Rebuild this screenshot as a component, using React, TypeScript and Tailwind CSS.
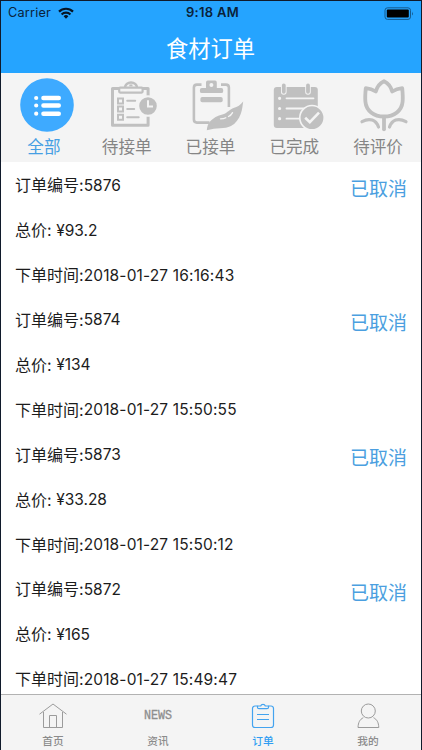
import React, { useState } from 'react';

interface Order {
  id: number;
  total: string;
  createdAt: string;
  status: string;
}

interface TabItem {
  label: string;
  icon: React.ReactNode;
}

const orders: Order[] = [
  { id: 5876, total: '93.2', createdAt: '2018-01-27 16:16:43', status: '已取消' },
  { id: 5874, total: '134', createdAt: '2018-01-27 15:50:55', status: '已取消' },
  { id: 5873, total: '33.28', createdAt: '2018-01-27 15:50:12', status: '已取消' },
  { id: 5872, total: '165', createdAt: '2018-01-27 15:49:47', status: '已取消' },
];

const ListIcon = () => (
  <svg viewBox="0 0 84 62" className="w-[84px] h-[62px]">
    <circle cx="46" cy="32" r="26.8" fill="#3eaaff" />
    <g stroke="#fff" strokeWidth="4.2" strokeLinecap="round">
      <path d="M35.2 25h.01M35.2 32.5h.01M35.2 40.7h.01" />
      <path d="M42.4 25h15.4M42.4 32.5h15.4M42.4 40.7h15.4" strokeWidth="4.4" />
    </g>
  </svg>
);

const PendingIcon = () => (
  <svg viewBox="0 0 84 62" className="w-[84px] h-[62px]" fill="none" stroke="#c0c0c0">
    <path d="M27.5 15.5h35.6v36.8H27.5z" strokeWidth="3" strokeLinejoin="round" />
    <path d="M40 14.5a6 5 0 0 1 12 0" strokeWidth="2.4" />
    <rect x="34.2" y="14.6" width="23.4" height="5" rx="1" fill="#f4f4f4" strokeWidth="2.2" />
    <path d="M44.3 12.4h3.2" strokeWidth="2" />
    <path d="M33 25.6h5v5h-5zM33 33.6h5v5h-5zM33 41.7h5v5h-5z" strokeWidth="2" />
    <path d="M42.2 27.8h8M42.2 36h7M42.2 44.2h11.5" strokeWidth="2" strokeLinecap="round" />
    <circle cx="63" cy="33" r="9.8" fill="#c0c0c0" stroke="#f4f4f4" strokeWidth="2" />
    <path d="M63 27.2v6.2h5" stroke="#f4f4f4" strokeWidth="2" />
  </svg>
);

const AcceptedIcon = () => (
  <svg viewBox="0 0 84 62" className="w-[84px] h-[62px]" fill="none">
    <g stroke="#c0c0c0" strokeWidth="2.6">
      <path d="M32.5 11.6h-4.6q-3 0-3 3v32q0 3 3 3H40.5" />
      <path d="M52 11.6h4.9q3 0 3 3v19.4" />
    </g>
    <path d="M37 15V9.4a1.8 1.8 0 0 1 1.8-1.8h7.2a1.8 1.8 0 0 1 1.8 1.8V15h4.5a1.9 1.9 0 0 1 1.9 1.9v1.3a1.9 1.9 0 0 1-1.9 1.900H32.8a1.9 1.9 0 0 1-1.900-1.900v-1.300a1.9 1.9 0 0 1 1.900-1.900z" fill="#c0c0c0" />
    <circle cx="42.4" cy="12" r="2" fill="#f4f4f4" />
    <rect x="31.4" y="24" width="22.3" height="5.2" rx="1.8" fill="#c0c0c0" />
    <path d="M37.800 57.300C38 54 39 50.500 41.500 48c4.500-4.500 9-5.800 13.500-7 3-1 6.500-5.200 9.500-6 4-1 7-3.300 9.700-6.600-.6 4-.9 8-2.400 12.300-2 5.500-5.300 10-9.800 12.300-6.500 3.300-14.500 1.300-24.200 4.300z" fill="#c0c0c0" />
    <path d="M51.500 45.800c2.200 0 4-.4 5.300-1.100M59.500 43.500c1.800-.8 3.200-2.200 4-3.900" stroke="#f4f4f4" strokeWidth="1.300" strokeLinecap="round" />
  </svg>
);

const DoneIcon = () => (
  <svg viewBox="0 0 84 62" className="w-[84px] h-[62px]" fill="none">
    <rect x="21.8" y="14" width="44" height="41" rx="3" fill="#c0c0c0" />
    <g stroke="#f4f4f4" strokeLinecap="round">
      <path d="M31.8 12.5v6.5M56 12.5v6.5" strokeWidth="5.6" />
      <path d="M34.5 25.3H61.5M34.5 35.5H55M34.5 45.7H48" strokeWidth="1.8" />
      <path d="M27.6 25.3h.01M27.6 35.5h.01M27.6 45.7h.01" strokeWidth="3.2" />
    </g>
    <path d="M31.8 12.3v6.5M56 12.3v6.5" stroke="#c0c0c0" strokeWidth="3.8" strokeLinecap="round" />
    <circle cx="60" cy="44.7" r="12.2" fill="#c0c0c0" stroke="#f4f4f4" strokeWidth="1.6" />
    <path d="M53.2 44.8l4.6 4.4 9.200-9.600" stroke="#f4f4f4" strokeWidth="2.6" />
  </svg>
);

const TulipIcon = () => (
  <svg viewBox="0 0 84 62" className="w-[84px] h-[62px]" fill="none" stroke="#c0c0c0" strokeWidth="3.8" strokeLinecap="round" strokeLinejoin="round">
    <path d="M39.8 18.5c1.200-4.500 4-8.300 8.200-10.300 4.200 2 7 5.800 8.200 10.300 2.700-1.800 6-3 10-3.300.4 4 .9 8.500.4 13.500C65.700 37.500 58.500 43.500 48 43.500S30.300 37.500 29.400 28.700c-.5-5 0-9.500.4-13.500 4 .3 7.300 1.500 10 3.300z" />
    <path d="M48 44v12.3" />
    <path d="M26 48.700c8-4.500 14-1.500 16.500 5.300M70 48.700c-8-4.500-14-1.500-16.500 5.300" strokeWidth="3.2" />
  </svg>
);

const HomeIcon = () => (
  <svg viewBox="0 0 30 28" className="w-[30px] h-[28px]" fill="none" stroke="#9b9b9b" strokeWidth="1">
    <path d="M1.500 13.200L15 3l13.500 10.200" />
    <path d="M5.500 11v15.500h19V11" />
    <path d="M11.500 26.500V14.500h7v12" />
  </svg>
);

const OrderIcon = () => (
  <svg viewBox="0 0 30 28" className="w-[30px] h-[28px]" fill="none" stroke="#43a3ef" strokeWidth="1.2">
    <path d="M9.500 5H7a2.500 2.500 0 0 0-2.500 2.500v16.500a2.500 2.500 0 0 0 2.500 2.500h16a2.500 2.500 0 0 0 2.500-2.500V7.500A2.500 2.500 0 0 0 23 5h-2.500" />
    <path d="M9.500 5h3.200a2.400 2.400 0 0 1 4.600 0h3.200v1.200a1.500 1.500 0 0 1-1.500 1.500h-8a1.500 1.500 0 0 1-1.500-1.500z" />
    <path d="M9 13.500h12M9 18.500h12" />
  </svg>
);

const UserIcon = () => (
  <svg viewBox="0 0 30 28" className="w-[30px] h-[28px]" fill="none" stroke="#9b9b9b" strokeWidth="1">
    <circle cx="15.3" cy="10" r="7" />
    <path d="M10.300 16.700c-3.500 1.800-5 4.500-5.300 9.800h20.800c-.3-5.300-1.800-8-5.300-9.800" />
  </svg>
);

const filters: TabItem[] = [
  { label: '全部', icon: <ListIcon /> },
  { label: '待接单', icon: <PendingIcon /> },
  { label: '已接单', icon: <AcceptedIcon /> },
  { label: '已完成', icon: <DoneIcon /> },
  { label: '待评价', icon: <TulipIcon /> },
];

const navItems: TabItem[] = [
  { label: '首页', icon: <HomeIcon /> },
  {
    label: '资讯',
    icon: <span className="mt-1 scale-y-115 font-['Liberation_Mono'] text-[11.7px] leading-none text-[#8e8e8e] [-webkit-text-stroke:0.3px_#8e8e8e]">NEWS</span>,
  },
  { label: '订单', icon: <OrderIcon /> },
  { label: '我的', icon: <UserIcon /> },
];

const StatusBar = () => (
  <div className="flex h-6 items-center justify-between pl-[7px] pr-[6px] text-[#0a2239]">
    <div className="flex flex-1 items-center gap-[7px]">
      <span className="text-[12.7px] tracking-[0.2px]">Carrier</span>
      <svg viewBox="0 0 16 12" className="h-3 w-4" fill="none" stroke="#061525" strokeWidth="2.2">
        <path d="M1 4.600a10 10 0 0 1 14 0M3.600 7.500a6.300 6.300 0 0 1 8.800 0" />
        <path d="M8 11.700L5.600 9.300a3.400 3.400 0 0 1 4.800 0z" fill="#061525" stroke="none" />
      </svg>
    </div>
    <span className="pl-[3px] text-[13px] font-semibold tracking-[0.3px]">9:18 AM</span>
    <div className="flex flex-1 justify-end pr-px">
      <svg viewBox="0 0 30 13" className="h-[13px] w-[30px]">
        <rect x="1" y="0.8" width="25.5" height="11.6" rx="2.5" fill="none" stroke="#145a8f" />
        <rect x="2.8" y="2.6" width="22" height="8" rx="1" fill="#000" />
        <path d="M28 4.600q1.700 2 0 4z" fill="#145a8f" />
      </svg>
    </div>
  </div>
);

const OrderRow = ({ order }: { order: Order }) => (
  <div className="flex justify-between pl-[14px] pr-[14px] text-[16px] text-[#1c1c1c]">
    <div>
      <div className="flex h-[44.9px] items-center whitespace-pre">
        订单编号:<span className="text-[15.5px]">{order.id}</span>
      </div>
      <div className="flex h-[44.9px] items-center whitespace-pre">
        总价: <span className="text-[15.5px]">¥{order.total}</span>
      </div>
      <div className="flex h-[44.9px] items-center whitespace-pre">
        下单时间:<span className="text-[15.5px] tracking-[0.15px]">{order.createdAt}</span>
      </div>
    </div>
    <div className="flex h-[54px] items-center text-[19px] text-[#4b9fe0]">{order.status}</div>
  </div>
);

const App = () => {
  const [filter, setFilter] = useState('全部');
  const [page, setPage] = useState('订单');

  return (
    <div className="flex h-[750px] w-[422px] flex-col overflow-hidden border-l border-r border-t border-[#101a2b] bg-white font-['Inter','Noto_Sans_CJK_SC',sans-serif]">
      <header className="h-[72px] shrink-0 bg-[#25a4ff]">
        <StatusBar />
        <h1 className="flex h-[47px] items-center justify-center pr-[1px] text-[22.3px] text-white">食材订单</h1>
      </header>

      <div className="flex h-[89px] shrink-0 bg-[#f4f4f4] pr-px">
        {filters.map(item => (
          <button
            key={item.label}
            onClick={() => setFilter(item.label)}
            className="flex w-1/5 flex-col items-center"
          >
            {item.icon}
            <span className={`text-[16.6px] leading-6 ${filter === item.label ? 'pl-[2px] text-[#469fe3]' : 'text-[#858585]'}`}>
              {item.label}
            </span>
          </button>
        ))}
      </div>

      <main className="min-h-0 flex-1 overflow-hidden pt-px">
        {orders.map(order => (
          <OrderRow key={order.id} order={order} />
        ))}
      </main>

      <nav className="flex h-14 shrink-0 border-t border-[#b2b2b2] bg-[#f4f4f4]">
        {navItems.map(item => (
          <button
            key={item.label}
            onClick={() => setPage(item.label)}
            className="flex w-1/4 flex-col items-center pr-px pt-[5px]"
          >
            <span className="flex h-[30px] items-center justify-center">{item.icon}</span>
            <span className={`mt-[5px] text-[10.7px] font-medium leading-4 ${page === item.label ? 'text-[#2f9df2]' : 'text-[#8c8c8c]'}`}>
              {item.label}
            </span>
          </button>
        ))}
      </nav>
    </div>
  );
};

export default App;
